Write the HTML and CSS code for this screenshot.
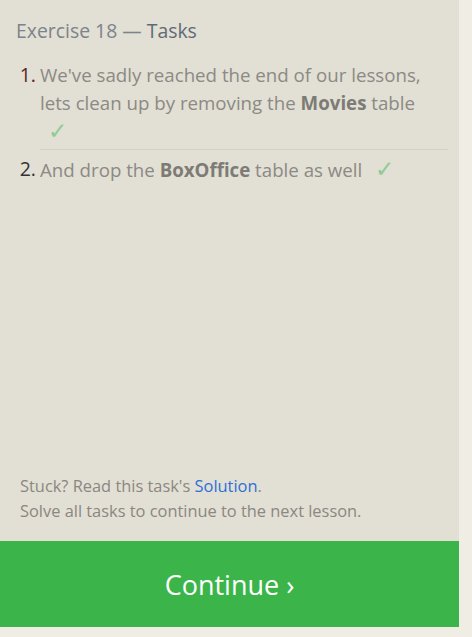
FILE: index.html
```html
<!DOCTYPE html>
<html>
<head>
<meta charset="utf-8">
<link rel="stylesheet" href="styles.css">
</head>
<body>
<div class="panel">
  <div class="content">
    <h2 class="title"><span class="ex">Exercise 18 — </span><span class="tasks">Tasks</span></h2>
    <ol class="list">
      <li class="item first"><span class="num">1.</span><div class="text">We've sadly reached the end of our lessons, lets clean up by removing the <b>Movies</b> table <span class="check">✓</span></div></li>
      <li class="item"><span class="num">2.</span><div class="text">And drop the <b>BoxOffice</b> table as well <span class="check">✓</span></div></li>
    </ol>
    <div class="spacer"></div>
    <div class="help">
      <p>Stuck? Read this task's <a href="#">Solution</a>.</p>
      <p>Solve all tasks to continue to the next lesson.</p>
    </div>
  </div>
  <div class="continue">Continue ›</div>
</div>
</body>
</html>
```
FILE: styles.css
```css
html, body {
  margin: 0;
  padding: 0;
  background: #f0ede5;
  height: 100%;
}
body {
  font-family: "Open Sans", "Noto Sans", sans-serif;
}
.panel {
  width: 459px;
  height: 627px;
  display: flex;
  flex-direction: column;
  background: #e2dfd4;
}
.content {
  flex: 1;
  display: flex;
  flex-direction: column;
  padding: 17px 11px 0 16px;
}
.title {
  margin: 0;
  font-size: 19.4px;
  font-weight: 400;
  line-height: 28px;
  color: #7d838b;
}
.tasks { color: #5f6a76; }
.list {
  list-style: none;
  margin: 16px 0 0 0;
  padding: 0;
}
.item {
  display: flex;
  font-size: 18.7px;
  line-height: 28px;
  color: #8b8a84;
}
.item.first .text {
  border-bottom: 1px solid #d5d2c7;
  padding-bottom: 3px;
  margin-bottom: 5px;
}
.num {
  width: 20px;
  flex: none;
  text-align: right;
  margin-right: 4px;
  color: #333;
  font-size: 19.5px;
}
.item.first .num { color: #5b2424; }
.text {
  flex: 1;
}
.text b { color: #7c7b76; font-weight: 700; }
.check {
  display: inline-block;
  color: #8dcc92;
  font-size: 23px;
  line-height: 28px;
  font-family: "DejaVu Sans", sans-serif;
  margin-left: 8px;
  margin-right: 8px;
}
.spacer { flex: 1; }
.help {
  padding: 0 4px 18px 4px;
  font-size: 16.4px;
  line-height: 25px;
  color: #8b8781;
}
.help p { margin: 0; }
.help a { color: #2e6fd4; text-decoration: none; }
.continue {
  height: 86px;
  background: #3bb54a;
  color: #fff;
  font-size: 27px;
  display: flex;
  align-items: center;
  justify-content: center;
}
```
